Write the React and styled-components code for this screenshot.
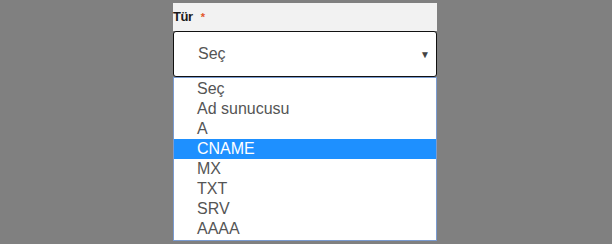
import React from 'react'
import styled, { createGlobalStyle } from 'styled-components'

const GlobalStyle = createGlobalStyle`
  html, body {
    margin: 0;
    padding: 0;
    background: #808080;
    font-family: "Liberation Sans", Arial, sans-serif;
  }
`

const options = ['Seç', 'Ad sunucusu', 'A', 'CNAME', 'MX', 'TXT', 'SRV', 'AAAA']

const App = () => {
  return (
    <>
      <GlobalStyle />
      <Page>
        <Field>
          <LabelRow>
            <Label>Tür</Label>
            <Required>*</Required>
          </LabelRow>
          <SelectBox>
            <span>Seç</span>
            <Arrow>▼</Arrow>
          </SelectBox>
          <OptionList>
            {options.map((opt) => (
              <OptionItem key={opt} selected={opt === 'CNAME'}>
                {opt}
              </OptionItem>
            ))}
          </OptionList>
        </Field>
      </Page>
    </>
  )
}

const Page = styled.div`
  width: 612px;
  height: 244px;
  padding-top: 3px;
  padding-left: 173px;
  box-sizing: border-box;
  overflow: hidden;
`

const Field = styled.div`
  width: 264px;
  display: flex;
  flex-direction: column;
`

const LabelRow = styled.div`
  background: #f2f2f2;
  height: 28px;
  display: flex;
  align-items: flex-start;
  padding-top: 6px;
  box-sizing: border-box;
  gap: 8px;
`

const Label = styled.span`
  font-size: 13px;
  font-weight: bold;
  color: #1a1a1a;
  letter-spacing: -0.4px;
`

const Required = styled.span`
  font-size: 11px;
  font-weight: bold;
  color: #e2572a;
  line-height: 12px;
  margin-top: 2px;
`

const SelectBox = styled.div`
  height: 46px;
  box-sizing: border-box;
  border: 1.5px solid #111;
  border-radius: 3px;
  background: #fff;
  display: flex;
  align-items: center;
  justify-content: space-between;
  padding: 0 6px 0 24px;
  font-size: 16px;
  color: #555;
`

const Arrow = styled.span`
  font-size: 10px;
  color: #444;
`

const OptionList = styled.ul`
  list-style: none;
  margin: 0;
  padding: 1px 0 0;
  height: 164px;
  box-sizing: border-box;
  border: 1px solid #7a9bd0;
  background: #fff;
  overflow: hidden;
`

const OptionItem = styled.li`
  height: 20px;
  line-height: 20px;
  padding-left: 23px;
  font-size: 16px;
  color: ${(p) => (p.selected ? '#fff' : '#555')};
  background: ${(p) => (p.selected ? '#1e90ff' : 'transparent')};
`

export default App
